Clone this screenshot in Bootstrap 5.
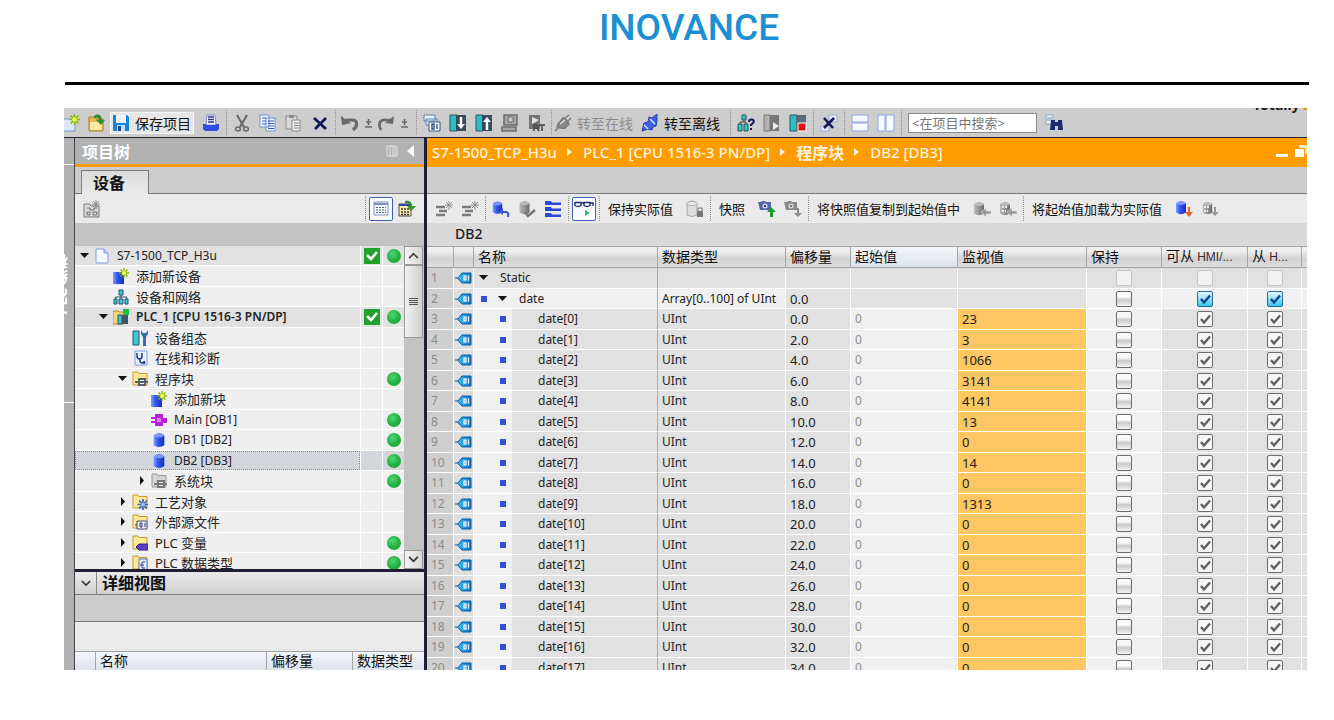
<!DOCTYPE html>
<html lang="zh-CN">
<head>
<meta charset="utf-8">
<meta name="viewport" content="width=device-width, initial-scale=1">
<title>S7-1500_TCP_H3u - DB2 [DB3]</title>
<link href="https://cdn.jsdelivr.net/npm/bootstrap@5.3.0/dist/css/bootstrap.min.css" rel="stylesheet">
<style>
  :root { --line: #24222c; --bar: #cdcdcd; --amber: #ff9c00; }
  body { font-family: "Noto Sans", "Noto Sans CJK SC", sans-serif; font-size: 12px; line-height: 20px; color: #1c1c1c; }
  svg { display: block; flex: none; }
  .page-pad { padding: 0 27px 50px 64px; }
  .brand-head { height: 85px; border-bottom: 3px solid #000; padding-top: 4px; margin: 0 -2px 23px 1px; }
  .brand-name { font-family: Roboto, sans-serif; font-weight: 500; font-size: 37px; line-height: 48px; color: #1c90d2; padding-left: 4px; }
  .ide { background: var(--bar); }
  .main-bar { height: 30px; border-bottom: 1px solid var(--line); }
  .edge-title { right: 0; top: -12px; width: 54px; font: 700 14px/18px "Noto Sans", sans-serif; }
  .edge-title span { color: #e88a10; }
  .ib { border: 0; background: none; padding: 0; width: 26px; height: 24px; display: flex; align-items: center; justify-content: center; flex: none; }
  .ib.edge { width: 20px; justify-content: flex-start; }
  .ib.slim { width: 24px; }
  .ib.drop { width: 12px; }
  .ib.boxed { width: 24px; margin: 0 1px; border: 1px solid #3f5fb0; border-radius: 2px; background: #fbfcff; }
  .vs { width: 5px; height: 26px; flex: none; background: linear-gradient(90deg, transparent 2px, #8d8d8d 2px, #8d8d8d 3px, transparent 3px); -webkit-mask: repeating-linear-gradient(#000 0 1px, transparent 1px 2px); }
  .tb { border: 0; background: none; padding: 0; display: flex; align-items: center; gap: 5px; white-space: nowrap; font: 400 14px/18px "Noto Sans CJK SC", sans-serif; color: #111; flex: none; }
  .tb:disabled { color: #8c8c8c; }
  .tb.raised { width: 84px; height: 22px; background: #e6e6e6; border: 1px solid #f6f6f6; padding-left: 1px; }
  .find { width: 129px; height: 20px; border: 1px solid #8b8b8b; border-radius: 0; padding: 0 3px; font-size: 13px; background: #fff; flex: none; }
  .find::placeholder { color: #777; }
  .rail { width: 11px; background: #b1b1b1; border-right: 1px solid #44424c; flex: none; }
  .rail-top { height: 27px; border-bottom: 1px solid #fff; }
  .rail-tab { height: 238px; border-bottom: 1px solid #fff; }
  .rail-text { writing-mode: vertical-rl; transform: rotate(180deg); right: 3px; bottom: 87px; font: 700 15px/20px "Noto Sans", "Noto Sans CJK SC", sans-serif; color: #fff; white-space: nowrap; }
  .tree-pane { width: 349px; flex: none; }
  .split { width: 3px; background: #1f1f31; flex: none; }
  .pane-head { height: 29px; background: #b1b1b1; border-bottom: 3px solid #f59a0a; color: #fff; font: 700 16px/24px "Noto Sans CJK SC", sans-serif; padding: 0 7px; }
  .tab-strip { height: 27px; border-bottom: 1px solid #7b7b7b; padding-left: 6px; }
  .tab-on { height: 24px; width: 68px; border: 1px solid #7b7b7b; border-bottom: 0; background: linear-gradient(#dcdcdc, #eaeaea); font: 700 16px/20px "Noto Sans CJK SC", sans-serif; margin-bottom: -1px; text-align: center; padding: 0 12px 2px 0; color: #111; }
  .tool-bar { height: 29px; background: #eaeaea; }
  .tool-bar .tb { font-size: 13px; padding: 0 9px 0 6px; }
  .tree-gap { height: 23px; background: #c3c3c3; }
  .tree-area { height: 323px; }
  .tree-row { height: 20px; border-bottom: 1px solid #fff; background: #efefef; font-size: 12px; white-space: nowrap; }
  .tree-row:nth-child(even) { height: 21px; }
  .tree-row.group { background: #e1e1e1; }
  .tree-row.picked { background: #d3d7dc; }
  .tree-row.picked .tree-label { outline: 1px dotted #888; outline-offset: -1px; }
  .tree-label { color: #222; }
  .tree-label .zh { font-size: 13px; line-height: 18px; }
  .twist { width: 19px; flex: none; border: 0; background: none; padding: 0; height: 18px; display: flex; align-items: center; justify-content: center; }
  .node-icon { width: 19px; flex: none; margin-right: 4px; }
  .st { width: 22px; border-left: 1px solid #fff; flex: none; display: flex; align-items: center; justify-content: center; }
  .scroll-col { width: 20px; background: #c3c3c3; flex: none; }
  .scroll-btn { border: 1px solid #999; background: linear-gradient(90deg, #f4f4f4, #d6d6d6); width: 19px; height: 19px; padding: 0; display: flex; align-items: center; justify-content: center; }
  .thumb { height: 73px; width: 19px; border: 1px solid #999; background: linear-gradient(90deg, #f2f2f2, #cfcfcf); }
  .detail-head { height: 26px; border-top: 3px solid #1f1f31; border-bottom: 1px solid #7b7b7b; background: linear-gradient(#e9e9e9, #d2d2d2); font: 700 16px/20px "Noto Sans CJK SC", sans-serif; color: #111; }
  .detail-head .ib { width: 22px; height: 22px; border-right: 1px solid #888; margin-right: 5px; }
  .detail-strip { height: 27px; border-bottom: 1px solid #7b7b7b; }
  .detail-blank { height: 29px; background: #eaeaea; }
  .plain-table { table-layout: fixed; width: 100%; border-collapse: separate; border-spacing: 0; }
  .plain-table th { font: 400 14px/16px "Noto Sans CJK SC", sans-serif; color: #111; padding: 0 0 3px 4px; height: 21px; white-space: nowrap; overflow: hidden; border-left: 1px solid #a5a5a5; background: linear-gradient(#efefef 20%, #d2d2d2 60%, #dedede); border-top: 1px solid #a0a0a0; border-bottom: 1px solid #a0a0a0; }
  .plain-table th.cool { background: linear-gradient(#f2f6fa, #dde2ea); }
  .plain-table th .en { font: 400 12px "Liberation Sans", sans-serif; color: #3a2a33; }
  .plain-table th:first-child { border-left: 0; }
  .crumbs { height: 29px; background: var(--amber); color: #fff; font: 500 15px/26px "Noto Sans", "Noto Sans CJK SC", sans-serif; padding: 0 0 2px 5px; white-space: nowrap; }
  .crumbs a { color: #fff3dc; text-decoration: none; }
  .crumbs a.zh { font: 700 16px/20px "Noto Sans CJK SC", sans-serif; }
  .crumbs svg { margin: 0 10px; }
  .crumbs .ib svg { margin: 0; }
  .block-name { height: 23px; background: #d9d9d9; font: 500 14px/22px "Noto Sans", sans-serif; padding-left: 28px; color: #1c1c1c; }
  .data-rows td { height: 21px; padding: 0 0 0 4px; line-height: 18px; border-bottom: 1px solid #fff; border-left: 1px solid #fff; background: #e1e1e1; white-space: nowrap; overflow: hidden; color: #222; }
  .data-rows tr:nth-child(even) td { height: 20px; }
  .data-rows td.no { background: #cfcfcf; color: #8b8b8b; border-left: 0; }
  .data-rows td.ic { padding: 0 0 0 1px; background: #dedede; }
  .data-rows td.ty { border-left-color: #aaa; }
  .data-rows td.lt { background: #f0f0f0; }
  .data-rows td.nc { padding: 0; }
  .data-rows td.in { background: linear-gradient(90deg, #f0f0f0 38px, #e1e1e1 38px); }
  .data-rows td.st0 { color: #8f8f8f; }
  .data-rows td.num { font-size: 13px; }
  .data-rows td.mv { background: #ffc763; }
  .data-rows td.ck { padding: 0; }
  .data-rows td.ck div { display: flex; justify-content: center; }
  .nm { display: flex; align-items: center; }
  .nm b { font-weight: 400; padding-left: 7px; }
  .lead-box { width: 19px; flex: none; display: flex; justify-content: center; }
  .tick { appearance: none; width: 16px; height: 16px; margin: 0; border: 1px solid #6c6c6c; border-radius: 2px; background: linear-gradient(#fafafa 35%, #c9c9c9 55%, #f4f4f4); display: block; }
  .tick.void { border-color: #c4c4c4; background: #f2f2f2; }
  .tick:checked { background: #f6f6f6 url("data:image/svg+xml,%3Csvg xmlns='http://www.w3.org/2000/svg' viewBox='0 0 14 14'%3E%3Cpath d='M3 7l3 3.500L12 3.500' fill='none' stroke='%23606060' stroke-width='2.400'/%3E%3C/svg%3E"); }
  .tick.live:checked { border-color: #2a6c94; background: url("data:image/svg+xml,%3Csvg xmlns='http://www.w3.org/2000/svg' viewBox='0 0 14 14'%3E%3Cpath d='M3 7l3 3.500L12 3.500' fill='none' stroke='%230a3f95' stroke-width='2.400'/%3E%3C/svg%3E"), linear-gradient(#e9f6ff, #39c6ee); }
</style>
</head>
<body>
<svg width="0" height="0" class="position-absolute" aria-hidden="true">
  <defs>
    <linearGradient id="gb" x1="0" x2="1"><stop offset="0" stop-color="#7ea0ff"/><stop offset=".4" stop-color="#3355ee"/><stop offset="1" stop-color="#1a2fb8"/></linearGradient>
    <linearGradient id="gg" x1="0" x2="1"><stop offset="0" stop-color="#bbb"/><stop offset="1" stop-color="#6c6c6c"/></linearGradient>
    <linearGradient id="gt" x1="0" x2="1"><stop offset="0" stop-color="#4cccf8"/><stop offset="1" stop-color="#0a78cc"/></linearGradient>
    <radialGradient id="gn" cx=".4" cy=".35"><stop offset="0" stop-color="#4fd873"/><stop offset="1" stop-color="#1fae3c"/></radialGradient>
  </defs>
  <symbol id="star" viewBox="0 0 10 10"><path d="M5 0v10M0 5h10M1.500 1.500l7 7M8.500 1.500l-7 7" stroke="#86b800" stroke-width="1.400"/><circle cx="5" cy="5" r="2" fill="#f6ff5a"/></symbol>
  <symbol id="new" viewBox="0 0 18 18"><path d="M-6 5h17v12H-6z" fill="#dbe8fb" stroke="#7d9cd0"/><use href="#star" x="5" y="0" width="11" height="11"/></symbol>
  <symbol id="open" viewBox="0 0 18 18"><path d="M1 3h6l1 2h7v12H1z" fill="#e9b84a" stroke="#a87a1c"/><path d="M2 8h12v8H2z" fill="#ffe9a3"/><path d="M6 2c4-3 8-1 8 4h3l-4 5-5-5h3c0-2-2-3-5-2z" fill="#2f8f35"/></symbol>
  <symbol id="save" viewBox="0 0 18 18"><path d="M1 1h14l2 2v14H1z" fill="#1583d8"/><path d="M4 1h10v8H4z" fill="#e8f5ff"/><path d="M5 11h8v6H5z" fill="#bfe2fb"/><path d="M6 12h3v5H6z" fill="#0a4a94"/></symbol>
  <symbol id="print" viewBox="0 0 18 18"><path d="M5 1h8l1 10H4z" fill="#f2f6ff" stroke="#7d90c0"/><path d="M6 3h6M6 5.500h6M6 8h6" stroke="#333a80" stroke-width="1.300"/><path d="M1 10h3v1h10v-1h3v5l-2 2H3l-2-2z" fill="#2f50e0"/></symbol>
  <symbol id="cut" viewBox="0 0 18 18"><path d="M4 1l7 12M14 1L7 13" stroke="#666" stroke-width="2"/><ellipse cx="5" cy="15" rx="2.300" ry="2" fill="none" stroke="#666" stroke-width="1.500"/><ellipse cx="13" cy="15" rx="2.300" ry="2" fill="none" stroke="#666" stroke-width="1.500"/></symbol>
  <symbol id="copy" viewBox="0 0 18 18"><path d="M1 1h9v12H1zM7 4h9v13H7z" fill="#f2f6ff" stroke="#6f8fd0"/><path d="M3 4h4M3 7h4M3 10h4M9 7h6M9 9.500h6M9 12h6M9 14.500h6" stroke="#3a58c0"/></symbol>
  <symbol id="paste" viewBox="0 0 18 18"><path d="M1 2h11v13H1z" fill="#d8d8d8" stroke="#8a8a8a"/><path d="M4 1h5v3H4z" fill="#8a8a8a"/><path d="M7 6h8v11H7z" fill="#eee" stroke="#8a8a8a"/><path d="M9 9h5M9 11.500h5M9 14h5" stroke="#888"/></symbol>
  <symbol id="del" viewBox="0 0 18 18"><path d="M3 4l12 11M15 4L4 15" stroke="#10185a" stroke-width="2.800"/></symbol>
  <symbol id="undo" viewBox="0 0 18 18"><path d="M5 6h6c6 0 6 6 1 10" fill="none" stroke="#6a6a6a" stroke-width="3.200"/><path d="M0 2l1 9 9-2z" fill="#6a6a6a"/></symbol>
  <symbol id="redo" viewBox="0 0 18 18"><path d="M14 6H9C2 5 1 11 4 16" fill="none" stroke="#6a6a6a" stroke-width="2.600"/><path d="M17 2l-1 8-8-1z" fill="#6a6a6a"/></symbol>
  <symbol id="pm" viewBox="0 0 9 12"><path d="M4.500 2v6M2 5h5M1 10h7" stroke="#6a6a6a" stroke-width="1.600"/></symbol>
  <symbol id="comp" viewBox="0 0 18 18"><path d="M1 1h11v6H1zM3 5h11v6H3z" fill="#e6effc" stroke="#5c7fae"/><path d="M6 8h11v9H6z" fill="#fff" stroke="#2f567f"/><path d="M9 10h2v5H9zM14 10v5" fill="none" stroke="#2f567f" stroke-width="1.400"/></symbol>
  <symbol id="dl" viewBox="0 0 18 18"><path d="M1 1h7v16H1z" fill="#26c0c8" stroke="#2d5560"/><path d="M7 1h10v16H7z" fill="#3a4a58"/><path d="M12 3v9" stroke="#fff" stroke-width="2.500"/><path d="M8 10h8l-4 5z" fill="#fff"/></symbol>
  <symbol id="ul" viewBox="0 0 18 18"><path d="M1 1h7v16H1z" fill="#26c0c8" stroke="#2d5560"/><path d="M7 1h10v16H7z" fill="#3a4a58"/><path d="M12 7v9" stroke="#fff" stroke-width="2.500"/><path d="M8 8h8l-4-5z" fill="#fff"/></symbol>
  <symbol id="sim" viewBox="0 0 18 18"><path d="M3 1h13v10H3zM1 13h14v4H1z" fill="#a4a4a4" stroke="#6c6c6c" stroke-width="1.500"/><path d="M7 3h5v5H7z" fill="#c8c8c8" stroke="#6c6c6c"/></symbol>
  <symbol id="rt" viewBox="0 0 18 18"><path d="M2 1h11v14H2z" fill="#747474"/><path d="M5 3l7 3-7 4z" fill="#e2e2e2"/><path d="M7 17v-6h3q2 2 0 3H7m3 0l2 3M12 11h6m-3 0v6" fill="none" stroke="#444" stroke-width="1.500"/></symbol>
  <symbol id="plug" viewBox="0 0 18 18"><path d="M1 17l4-4M11 4l4-3M14 7l3-3M4 10l5-6q4 1 6 6l-4 4q-5 1-8-1z" fill="#8a8a8a" stroke="#7a7a7a" stroke-width="1.500"/><path d="M6 10l5-4" stroke="#ddd" stroke-width="1.500"/></symbol>
  <symbol id="plug2" viewBox="0 0 18 18"><path d="M1 17l2-8 4-1 1-5 3 1 5-4v6l-1 6-3 1-1 3-4-1-3 1z" fill="#3e62e0" stroke="#2541a8"/><path d="M3 11l4 4M9 5l5 5" stroke="#cfe0ff" stroke-width="1.500"/></symbol>
  <symbol id="acc" viewBox="0 0 18 18"><path d="M5 1h4v5H5zM1 10h4v7H1zM7 10h4v7H7z" fill="#2fc4c4" stroke="#2d5560"/><path d="M7 6v2H3v2m4-2h2v2" fill="none" stroke="#444"/><path d="M12 8q0-3 3-2.500 3 1 1 3.500l-2 2v1m0 2v2" fill="none" stroke="#10185a" stroke-width="2"/></symbol>
  <symbol id="run" viewBox="0 0 18 18"><path d="M1 1h6v16H1z" fill="#b4b4b4" stroke="#777"/><path d="M7 1h9v16H7z" fill="#777"/><path d="M10 8l6 4-6 4z" fill="#eee"/></symbol>
  <symbol id="stop" viewBox="0 0 18 18"><path d="M1 1h7v16H1z" fill="#26c0c8" stroke="#2d5560"/><path d="M7 1h10v16H7z" fill="#5a6a78"/><path d="M9 9h8v8H9z" fill="#e01010" stroke="#fff"/></symbol>
  <symbol id="xref" viewBox="0 0 18 18"><path d="M9 1h8v7H9zM1 12h8v5H1z" fill="#e6ecfa" stroke="#9aaacc"/><path d="M4 4l9 10M14 4L4 14" stroke="#10185a" stroke-width="2.600"/></symbol>
  <symbol id="hs" viewBox="0 0 18 18"><path d="M1 1h16v7H1zM1 9h16v8H1z" fill="#f6f9ff" stroke="#93a6e0"/></symbol>
  <symbol id="vsp" viewBox="0 0 18 18"><path d="M1 1h7v16H1zM9 1h8v16H9z" fill="#f6f9ff" stroke="#93a6e0"/></symbol>
  <symbol id="bino" viewBox="0 0 18 18"><path d="M1 1h7v9H1z" fill="#e6effc" stroke="#9ab"/><path d="M2 4h5M2 6h5" stroke="#79a"/><path d="M6 6h4v2h3V6h4l1 10h-5v-4h-3v4H5z" fill="#1c2a6e"/></symbol>
  <symbol id="cols" viewBox="0 0 12 12"><path d="M1 1h10v10H1zM4 1v10M7 1v10M9 1v10" fill="none" stroke="#e2e2e2"/></symbol>
  <symbol id="gnew" viewBox="0 0 18 18"><path d="M1 4h6l1 2h8v11H1z" fill="#ddd" stroke="#777"/><path d="M4 8h3v2h4V8h3M4 12h3v3H4zM10 12h4v3h-4z" fill="none" stroke="#666"/><path d="M13 0v8M9 4h8M10 1l6 6M16 1l-6 6" stroke="#888"/></symbol>
  <symbol id="grid" viewBox="0 0 18 18"><path d="M2 2h14v13H2z" fill="#f3f7ff" stroke="#8193bb"/><path d="M2 3h14v2H2z" fill="#8193bb"/><path d="M4 7.500h10M4 10h10M4 12.500h10" stroke="#566" stroke-dasharray="2 1"/></symbol>
  <symbol id="gridgo" viewBox="0 0 18 18"><path d="M1 4h12v12H1z" fill="#ffeeb0" stroke="#445"/><path d="M1 4h12v2H1z" fill="#2c4ca8"/><path d="M3 9h9M3 12h9M3 14.500h9" stroke="#333" stroke-width="1.500" stroke-dasharray="2 1"/><path d="M7 1c5-1 7 2 7 5h4l-5 5-4-5h3c0-2-2-3-5-3z" fill="#2f8f35"/></symbol>
  <symbol id="rowx" viewBox="0 0 18 18"><path d="M1 7h9M4 11h8M1 15h9" stroke="#7c7c7c" stroke-width="2.400"/><path d="M14 1v9M10 5h8M11 2l6 6M17 2l-6 6" stroke="#909090"/></symbol>
  <symbol id="cyl" viewBox="0 0 14 18"><path d="M1 4q6-5 12 0v11q-6 4-12 0z" fill="url(#gb)"/><ellipse cx="7" cy="4" rx="5.500" ry="2" fill="#7d96ff"/></symbol>
  <symbol id="cylg" viewBox="0 0 14 18"><path d="M1 4q6-5 12 0v11q-6 4-12 0z" fill="url(#gg)"/><ellipse cx="7" cy="4" rx="5.500" ry="2" fill="#bcbcbc"/></symbol>
  <symbol id="cylback" viewBox="0 0 18 18"><use href="#cyl" x="0" y="0" width="11" height="15"/><path d="M9 12h5q3 0 2 5" fill="none" stroke="#3558c8" stroke-width="2"/><path d="M7 12l4-4v7z" fill="#3558c8"/></symbol>
  <symbol id="cylok" viewBox="0 0 18 18"><use href="#cylg" x="0" y="0" width="13" height="15"/><path d="M7 12l3 4 7-6" fill="none" stroke="#777" stroke-width="2.500"/></symbol>
  <symbol id="expand" viewBox="0 0 18 18"><path d="M1 1h6l1 1.500h9V5H1zM1 7h6l1 1.500h9V11H1zM1 13h6l1 1.500h9V17H1z" fill="#2c48d8"/></symbol>
  <symbol id="glass" viewBox="0 0 20 18"><path d="M1 2.500h6v3q-3 2-6 0zM10 2.500h6v3q-3 2-6 0zM7 3h3M16 3h3v3" fill="none" stroke="#1c2a6e" stroke-width="1.400"/><path d="M11 10l5 3-5 3z" fill="#27c06a"/></symbol>
  <symbol id="cyllock" viewBox="0 0 18 18"><path d="M1 3q5-4 10 0v12q-5 3-10 0z" fill="#ddd" stroke="#aaa"/><ellipse cx="6" cy="3.500" rx="5" ry="2" fill="#eee" stroke="#aaa"/><path d="M11 11h6v6h-6z" fill="#777"/><path d="M12 11V8h4v3" fill="none" stroke="#777"/></symbol>
  <symbol id="camup" viewBox="0 0 18 18"><path d="M0 2h3l1-1h3l1 1h5v8H2z" fill="#5366a0"/><circle cx="7" cy="6" r="2.500" fill="#dfe6ff"/><circle cx="7" cy="6" r="1.200" fill="#334"/><path d="M12 17v-5H9l4-5 5 5h-3v5z" fill="#21962c"/></symbol>
  <symbol id="camdn" viewBox="0 0 18 18"><path d="M0 2h3l1-1h3l1 1h5v8H2z" fill="#8a8a8a"/><circle cx="7" cy="6" r="2.500" fill="#ddd"/><circle cx="7" cy="6" r="1.200" fill="#777"/><path d="M13 8v5h-3l4 4 4-4h-3V8z" fill="#8a8a8a"/></symbol>
  <symbol id="cylin" viewBox="0 0 18 18"><use href="#cylg" x="0" y="1" width="12" height="15"/><path d="M8 12l5-4v3h5v3h-5v3z" fill="#999" stroke="#ddd" stroke-width=".6"/></symbol>
  <symbol id="cylin2" viewBox="0 0 18 18"><use href="#cylg" x="0" y="1" width="12" height="15"/><path d="M3 7h5M3 11h4" stroke="#eee" stroke-width="2" stroke-dasharray="2 1"/><path d="M8 12l5-4v3h5v3h-5v3z" fill="#999" stroke="#ddd" stroke-width=".6"/></symbol>
  <symbol id="cyldn" viewBox="0 0 18 18"><use href="#cyl" x="0" y="0" width="12" height="15"/><path d="M13 7v5h-3l4 5 4-5h-3V7z" fill="#e8602a"/></symbol>
  <symbol id="cyldn2" viewBox="0 0 18 18"><use href="#cylg" x="1" y="1" width="11" height="14"/><path d="M3 7h5M3 11h4" stroke="#eee" stroke-width="2" stroke-dasharray="2 1"/><path d="M13 7v5h-3l4 4 4-4h-3V7z" fill="#999"/></symbol>
  <symbol id="page" viewBox="0 0 16 16"><path d="M2 1h8l4 4v10H2z" fill="#f4f8ff" stroke="#7f9fe0"/><path d="M10 1v4h4" fill="#b7cdf8" stroke="#7f9fe0"/></symbol>
  <symbol id="add" viewBox="0 0 16 16"><path d="M0 4h11v12H0z" fill="url(#gb)"/><use href="#star" x="6" y="0" width="10" height="10"/></symbol>
  <symbol id="net" viewBox="0 0 16 16"><path d="M6 1h4v5H6zM1 10h3v5H1zM6 10h4v5H6zM12 10h3v5h-3z" fill="#3cc8d0" stroke="#2a5070"/><path d="M8 6v4M2.500 10V8h11v2" fill="none" stroke="#2a5070"/></symbol>
  <symbol id="plc" viewBox="0 0 16 16"><path d="M0 2h5l1 1h5v12H0z" fill="#f5d878" stroke="#b08a30"/><path d="M5 6h4v9H5z" fill="#3cc8d0" stroke="#2a5070"/><path d="M9 6h6v9H9z" fill="#445566"/><path d="M10 0h6v6h-6z" fill="#22c040"/></symbol>
  <symbol id="cfg" viewBox="0 0 16 16"><path d="M1 1h6v14H1z" fill="#3cc8d0" stroke="#2a5070"/><path d="M9 0v4l2 3v9h3V7l2-3V0l-2 3h-3z" fill="#3d6ca8"/></symbol>
  <symbol id="diag" viewBox="0 0 16 16"><path d="M3 1h12v14H3z" fill="#eaf1ff" stroke="#7f9fe0"/><path d="M5 3v3q0 3 2.500 3T10 6V3M8 9v2q0 2 3 2" fill="none" stroke="#223a88" stroke-width="1.500"/><circle cx="12" cy="12.500" r="1.500" fill="#223a88"/></symbol>
  <symbol id="fold" viewBox="0 0 16 16"><path d="M1 1h5l1 1.500h8V14H1z" fill="#ffe896" stroke="#c49a38"/></symbol>
  <symbol id="fblk" viewBox="0 0 16 16"><use href="#fold"/><path d="M6 7h8v3h2v2h-2v3H6v-3H3v-2h3z" fill="#56606e"/><path d="M8 9h4v1H8zM8 12h4v1H8z" fill="#fff"/></symbol>
  <symbol id="fsys" viewBox="0 0 16 16"><path d="M1 1h5l1 1.500h8V14H1z" fill="#d4d4d4" stroke="#999"/><path d="M6 7h8v3h2v2h-2v3H6v-3H3v-2h3z" fill="#777"/><path d="M8 9h4v1H8zM8 12h4v1H8z" fill="#eee"/></symbol>
  <symbol id="fgear" viewBox="0 0 16 16"><use href="#fold"/><path d="M11 5v11M5.500 10.500h11M7 6.500l8 8M15 6.500l-8 8" stroke="#2c66d0" stroke-width="1.700"/><circle cx="11" cy="10.500" r="2" fill="#9cc4ff"/></symbol>
  <symbol id="fsrc" viewBox="0 0 16 16"><use href="#fold"/><path d="M5 7h10v8H5z" fill="#e8eef8" stroke="#44506a"/><path d="M3 11h2M8 9v4h2V9zM13 9v4" fill="none" stroke="#333f6a"/></symbol>
  <symbol id="ftag" viewBox="0 0 16 16"><use href="#fold"/><path d="M4 12l3-3h9v6H7z" fill="#5a3ec8" stroke="#38228a"/></symbol>
  <symbol id="ftyp" viewBox="0 0 16 16"><use href="#fold"/><path d="M7 4h8v12H7z" fill="#e8eef8" stroke="#5a78b8"/><path d="M13 7h-3v6h3M8 10h4" fill="none" stroke="#333f9a"/></symbol>
  <symbol id="ob" viewBox="0 0 16 16"><path d="M4 2h8v4h4v5h-4v3H4v-3H0V9h4V7H0V5h4z" fill="#b822dc"/><path d="M6 6h4v4H6z" fill="#e07af4"/></symbol>
  <symbol id="tag" viewBox="0 0 17 12"><path d="M0 6h3l4-5h9v10H7L3 6.500" fill="url(#gt)" stroke="#0b5a9c"/><path d="M9 4h2v4H9zM13.500 3.500v5" fill="none" stroke="#fff" stroke-width="1.200"/></symbol>
  <symbol id="down" viewBox="0 0 10 6"><path d="M0 0h9L4.500 5z" fill="#111"/></symbol>
  <symbol id="right" viewBox="0 0 6 10"><path d="M1 0v9l4-4.500z" fill="#111"/></symbol>
  <symbol id="ok" viewBox="0 0 16 16"><path d="M0 0h16v16H0z" fill="#22a02c"/><path d="M3 7l4 4 6-7" fill="none" stroke="#fff" stroke-width="2.600"/></symbol>
  <symbol id="dot" viewBox="0 0 16 16"><circle cx="8" cy="8" r="7" fill="url(#gn)"/></symbol>
  <symbol id="chevd" viewBox="0 0 12 8"><path d="M1 1l5 5 5-5" fill="none" stroke="#333" stroke-width="2"/></symbol>
  <symbol id="chevu" viewBox="0 0 12 8"><path d="M1 7l5-5 5 5" fill="none" stroke="#444" stroke-width="2"/></symbol>
  <symbol id="sep" viewBox="0 0 6 8"><path d="M0 0v8l5-4z" fill="#fff3dc"/></symbol>
</svg>

<div class="page-pad vh-100 d-flex flex-column">
  <header class="brand-head text-center flex-shrink-0"><span class="brand-name">INOVANCE</span></header>

  <main class="ide flex-grow-1 overflow-hidden d-flex flex-column" style="min-height:0">
    <div class="main-bar d-flex align-items-center position-relative overflow-hidden flex-shrink-0" id="mainBar">
      <button class="ib edge" aria-label="新建" data-i="new"></button>
      <button class="ib" aria-label="打开" data-i="open"></button>
      <button class="tb raised" data-i="save">保存项目</button>
      <button class="ib ms-1" aria-label="打印" data-i="print"></button>
      <span class="vs"></span>
      <button class="ib" aria-label="剪切" data-i="cut"></button>
      <button class="ib" aria-label="复制" data-i="copy"></button>
      <button class="ib" aria-label="粘贴" data-i="paste"></button>
      <button class="ib" aria-label="删除" data-i="del"></button>
      <span class="vs"></span>
      <button class="ib slim" aria-label="撤消" data-i="undo"></button>
      <button class="ib drop" aria-label="撤消列表" data-i="pm" data-w="9" data-h="12"></button>
      <button class="ib slim" aria-label="重做" data-i="redo"></button>
      <button class="ib drop" aria-label="重做列表" data-i="pm" data-w="9" data-h="12"></button>
      <span class="vs ms-1"></span>
      <button class="ib" aria-label="编译" data-i="comp"></button>
      <button class="ib" aria-label="下载" data-i="dl"></button>
      <button class="ib" aria-label="上传" data-i="ul"></button>
      <button class="ib" aria-label="仿真" data-i="sim"></button>
      <button class="ib" aria-label="运行系统" data-i="rt"></button>
      <span class="vs"></span>
      <button class="tb" disabled data-i="plug">转至在线</button>
      <button class="tb ms-2" data-i="plug2">转至离线</button>
      <span class="vs ms-2"></span>
      <button class="ib" aria-label="可访问的设备" data-i="acc"></button>
      <button class="ib" aria-label="启动 CPU" data-i="run"></button>
      <button class="ib" aria-label="停止 CPU" data-i="stop"></button>
      <span class="vs"></span>
      <button class="ib" aria-label="交叉引用" data-i="xref"></button>
      <span class="vs"></span>
      <button class="ib" aria-label="水平拆分" data-i="hs"></button>
      <button class="ib" aria-label="垂直拆分" data-i="vsp"></button>
      <span class="vs me-1"></span>
      <input class="find" type="text" aria-label="在项目中搜索" placeholder="&lt;在项目中搜索&gt;">
      <button class="ib ms-1" aria-label="搜索" data-i="bino"></button>
      <div class="edge-title position-absolute text-nowrap overflow-hidden">Totally <span>I</span></div>
    </div>

    <div class="d-flex flex-grow-1 overflow-hidden">
      <div class="rail">
        <div class="rail-top"></div>
        <div class="rail-tab position-relative overflow-hidden"><span class="rail-text position-absolute">PLC 编程</span></div>
      </div>

      <section class="tree-pane d-flex flex-column">
        <div class="pane-head d-flex align-items-center flex-shrink-0">项目树
          <button class="ib ms-auto" aria-label="列视图" data-i="cols" data-w="12" data-h="12"></button>
          <button class="ib drop" aria-label="折叠"><svg width="8" height="12"><path d="M7 0v12L0 6z" fill="#fff"/></svg></button>
        </div>
        <div class="tab-strip d-flex align-items-end flex-shrink-0"><button class="tab-on">设备</button></div>
        <div class="tool-bar d-flex align-items-center flex-shrink-0 ps-1 pe-1">
          <button class="ib" aria-label="添加组" data-i="gnew"></button>
          <span class="vs ms-auto"></span>
          <button class="ib boxed" aria-label="列表" data-i="grid"></button>
          <button class="ib" aria-label="总览" data-i="gridgo"></button>
        </div>
        <div class="tree-gap flex-shrink-0"></div>
        <div class="tree-area d-flex overflow-hidden flex-shrink-0">
          <div class="flex-grow-1" id="tree" role="tree"></div>
          <div class="scroll-col d-flex flex-column">
            <button class="scroll-btn" aria-label="向上滚动"><svg width="11" height="7"><use href="#chevu"/></svg></button>
            <div class="thumb d-flex align-items-center justify-content-center"><svg width="9" height="8"><path d="M0 .5h9M0 2.500h9M0 4.500h9M0 6.500h9" stroke="#555"/></svg></div>
            <button class="scroll-btn mt-auto" aria-label="向下滚动"><svg width="11" height="7"><use href="#chevd"/></svg></button>
          </div>
        </div>
        <div class="detail-head d-flex flex-shrink-0"><button class="ib" aria-label="折叠详细视图" data-i="chevd" data-w="10" data-h="7"></button>详细视图</div>
        <div class="detail-strip flex-shrink-0"></div>
        <div class="detail-blank flex-shrink-0"></div>
        <table class="plain-table">
          <colgroup><col style="width:20px"><col><col style="width:86px"><col style="width:72px"></colgroup>
          <thead><tr><th class="cool"></th><th class="cool">名称</th><th class="cool">偏移量</th><th class="cool">数据类型</th></tr></thead>
        </table>
      </section>
      <div class="split"></div>

      <section class="flex-grow-1 overflow-hidden">
        <nav class="crumbs d-flex align-items-center" aria-label="路径">
          <a href="#">S7-1500_TCP_H3u</a><svg width="6" height="8"><use href="#sep"/></svg>
          <a href="#">PLC_1 [CPU 1516-3 PN/DP]</a><svg width="6" height="8"><use href="#sep"/></svg>
          <a href="#" class="zh">程序块</a><svg width="6" height="8"><use href="#sep"/></svg>
          <a href="#">DB2 [DB3]</a>
          <button class="ib ms-auto" aria-label="最小化"><svg width="12" height="12"><path d="M0 8h12v3H0z" fill="#fff"/></svg></button>
          <button class="ib drop" aria-label="还原"><svg width="12" height="13"><path d="M4 0h8v9h-2V3H4z" fill="#ffe9c4"/><path d="M0 4h9v8H0z" fill="#fff"/></svg></button>
        </nav>
        <div class="tab-strip"></div>
        <div class="tool-bar d-flex align-items-center ps-1">
          <button class="ib" aria-label="插入行" data-i="rowx"></button>
          <button class="ib" aria-label="添加行" data-i="rowx"></button>
          <span class="vs"></span>
          <button class="ib" aria-label="复位起始值" data-i="cylback"></button>
          <button class="ib" aria-label="更新接口" data-i="cylok"></button>
          <button class="ib" aria-label="扩展模式" data-i="expand"></button>
          <span class="vs"></span>
          <button class="ib boxed" aria-label="全部监视" data-i="glass" data-w="20"></button>
          <span class="vs"></span>
          <button class="tb">保持实际值</button>
          <button class="ib" aria-label="锁定" data-i="cyllock"></button>
          <span class="vs"></span>
          <button class="tb">快照</button>
          <button class="ib" aria-label="上传快照" data-i="camup"></button>
          <button class="ib" aria-label="下载快照" data-i="camdn"></button>
          <span class="vs"></span>
          <button class="tb">将快照值复制到起始值中</button>
          <button class="ib" aria-label="复制全部" data-i="cylin"></button>
          <button class="ib" aria-label="复制保持值" data-i="cylin2"></button>
          <span class="vs"></span>
          <button class="tb">将起始值加载为实际值</button>
          <button class="ib" aria-label="加载全部" data-i="cyldn"></button>
          <button class="ib" aria-label="加载选定" data-i="cyldn2"></button>
        </div>
        <div class="block-name">DB2</div>
        <table class="plain-table">
          <colgroup><col style="width:26px"><col style="width:20px"><col style="width:184px"><col style="width:128px"><col style="width:65px"><col style="width:107px"><col style="width:129px"><col style="width:75px"><col style="width:86px"><col style="width:54px"><col></colgroup>
          <thead><tr><th></th><th></th><th>名称</th><th>数据类型</th><th>偏移量</th><th class="cool">起始值</th><th>监视值</th><th>保持</th><th>可从 <span class="en">HMI/...</span></th><th>从 <span class="en">H...</span></th><th></th></tr></thead>
          <tbody class="data-rows" id="rows"></tbody>
        </table>
      </section>
    </div>
  </main>
</div>

<script src="https://cdn.jsdelivr.net/npm/bootstrap@5.3.0/dist/js/bootstrap.bundle.min.js"></script>
<script>
  const icon = (id, w = 18, h = 18) => `<svg width="${w}" height="${h}" aria-hidden="true"><use href="#${id}"/></svg>`;
  document.querySelectorAll('[data-i]').forEach(b => b.insertAdjacentHTML('afterbegin', icon(b.dataset.i, b.dataset.w, b.dataset.h)));

  // [level, twist, icon, label, status, row class]
  const nodes = [
    [0, 'down', 'page', 'S7-1500_TCP_H3u', 'ok dot', 'group'],
    [1, '', 'add', '添加新设备', '', ''],
    [1, '', 'net', '设备和网络', '', ''],
    [1, 'down', 'plc', 'PLC_1 [CPU 1516-3 PN/DP]', 'ok dot', 'group fw-semibold'],
    [2, '', 'cfg', '设备组态', '', ''],
    [2, '', 'diag', '在线和诊断', '', ''],
    [2, 'down', 'fblk', '程序块', 'dot', ''],
    [3, '', 'add', '添加新块', '', ''],
    [3, '', 'ob', 'Main [OB1]', 'dot', ''],
    [3, '', 'cyl', 'DB1 [DB2]', 'dot', ''],
    [3, '', 'cyl', 'DB2 [DB3]', 'dot', 'picked'],
    [3, 'right', 'fsys', '系统块', 'dot', ''],
    [2, 'right', 'fgear', '工艺对象', '', ''],
    [2, 'right', 'fsrc', '外部源文件', '', ''],
    [2, 'right', 'ftag', 'PLC 变量', 'dot', ''],
    [2, 'right', 'ftyp', 'PLC 数据类型', 'dot', '']
  ];
  const twist = t => t === 'down' ? icon('down', 10, 6) : icon('right', 6, 10);
  document.getElementById('tree').innerHTML = nodes.map(([lv, tw, ic, label, st, cls]) => `
    <div class="tree-row d-flex ${cls}" role="treeitem">
      <div class="tree-label d-flex align-items-center flex-grow-1" style="padding-left:${lv * 19}px">
        ${tw ? `<button class="twist" aria-label="展开 ${label}">${twist(tw)}</button>` : '<span class="twist"></span>'}
        <span class="node-icon">${icon(ic, 16, 16)}</span>
        <span class="${/[\u4e00-\u9fff]/.test(label) ? 'zh' : ''}">${label}</span>
      </div>
      <div class="st">${st.includes('ok') ? icon('ok', 16, 16) : ''}</div>
      <div class="st">${st.includes('dot') ? icon('dot', 16, 16) : ''}</div>
    </div>`).join('');

  const values = [23, 3, 1066, 3141, 4141, 13, 0, 14, 0, 1313, 0, 0, 0, 0, 0, 0, 0, 0];
  const tick = (name, cls, on) => `<div><input type="checkbox" class="tick ${cls}" aria-label="${name}"${on ? ' checked' : ''}></div>`;
  const square = '<svg width="6" height="6"><path d="M0 0h6v6H0z" fill="#3350d0"/></svg>';
  const box = inner => `<span class="lead-box">${inner}</span>`;
  const line = (n, lead, name, nameCls, type, off, start, val, lt, cls, on) => `
    <tr><td class="no">${n}</td><td class="ic">${icon('tag', 17, 12)}</td>
    <td class="nc ${nameCls}"><div class="nm">${lead}<b>${name}</b></div></td><td class="ty ${nameCls === 'lt' ? 'lt' : ''}">${type}</td><td class="num">${off}</td>
    <td class="st0 ${start === '' ? '' : 'lt'}">${start}</td><td class="num ${val === '' ? '' : 'mv'}">${val}</td>
    <td class="ck ${n > 1 ? 'lt' : ''}">${tick('保持', cls === 'void' ? cls : '', false)}</td>
    <td class="ck ${lt}">${tick('可从 HMI 访问', cls, on)}</td><td class="ck ${lt}">${tick('从 HMI 可写', cls, on)}</td><td class="${lt}"></td></tr>`;
  document.getElementById('rows').innerHTML =
    line(1, box(icon('down', 10, 6)), 'Static', '', '', '', '', '', '', 'void', false) +
    line(2, box(square) + box(icon('down', 10, 6)), 'date', 'lt', 'Array[0..100] of UInt', '0.0', '', '', 'lt', 'live', true) +
    values.map((v, i) => line(i + 3, box('') + box(square) + box(''), `date[${i}]`, 'in', 'UInt', (i * 2) + '.0', 0, v, '', '', true)).join('');
</script>
</body>
</html>
